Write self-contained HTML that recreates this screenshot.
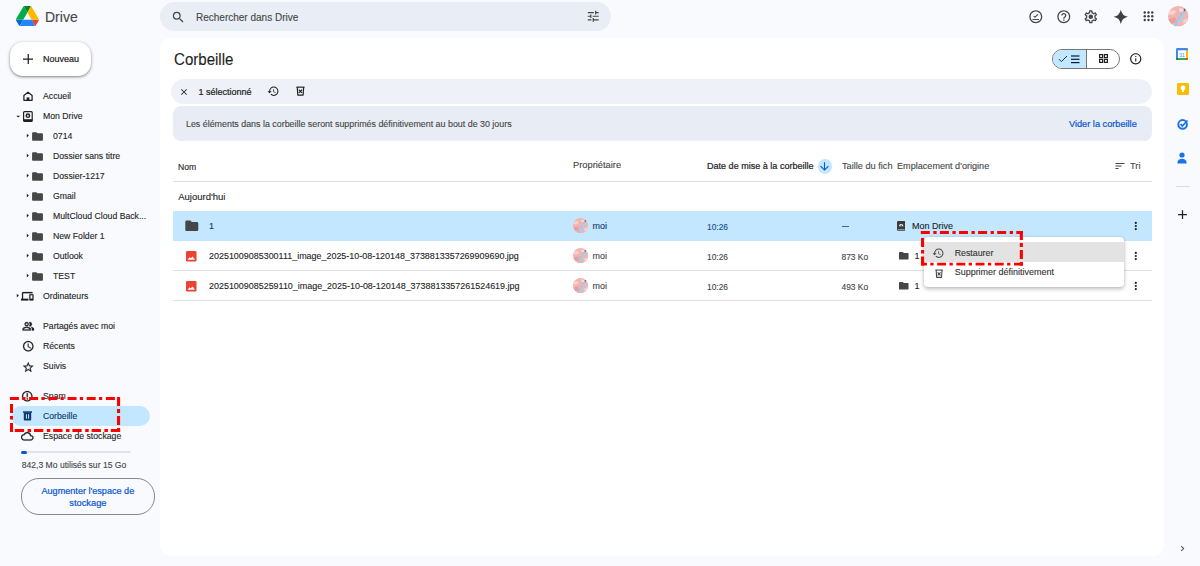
<!DOCTYPE html>
<html><head><meta charset="utf-8">
<style>
*{box-sizing:border-box;margin:0;padding:0}
html,body{width:1200px;height:566px;overflow:hidden;background:#f8fafd;font-family:"Liberation Sans",sans-serif;color:#1f1f1f;position:relative}
.a{position:absolute}
.t{position:absolute;white-space:nowrap;line-height:1}
svg{display:block}
</style></head><body>
<svg class="a" style="left:16.2px;top:6px" width="22.8" height="20.2" viewBox="0 0 87.3 78" preserveAspectRatio="none">
<path d="m6.6 66.85 3.85 6.65c.8 1.4 1.95 2.5 3.3 3.3l13.75-23.8h-27.5c0 1.55.4 3.1 1.2 4.5z" fill="#0066da"/>
<path d="m43.65 25-13.75-23.8c-1.35.8-2.5 1.9-3.3 3.3l-25.4 44a9.06 9.06 0 0 0 -1.2 4.5h27.5z" fill="#00ac47"/>
<path d="m73.55 76.8c1.35-.8 2.5-1.9 3.3-3.3l1.6-2.75 7.65-13.25c.8-1.4 1.2-2.95 1.2-4.5h-27.502l5.852 11.5z" fill="#ea4335"/>
<path d="m43.65 25 13.75-23.8c-1.35-.8-2.9-1.2-4.5-1.2h-18.5c-1.6 0-3.15.45-4.5 1.2z" fill="#00832d"/>
<path d="m59.8 53h-32.3l-13.75 23.8c1.35.8 2.9 1.2 4.5 1.2h50.8c1.6 0 3.15-.45 4.5-1.2z" fill="#2684fc"/>
<path d="m73.4 26.5-12.7-22c-.8-1.4-1.95-2.5-3.3-3.3l-13.75 23.8 16.15 28h27.45c0-1.55-.4-3.1-1.2-4.5z" fill="#ffba00"/>
</svg>
<div class="t" style="left:45px;top:9.75px;font-size:14px;color:#444746;-webkit-text-stroke:0.12px #444746;">Drive</div>
<div class="a" style="left:160px;top:2px;width:451px;height:29px;border-radius:15px;background:#e9eef6"></div>
<svg class="a" style="left:170.8px;top:9.8px;" width="14.6" height="14.6" viewBox="0 0 24 24"><path fill="#444746" fill-rule="evenodd" d="M15.5 14h-.79l-.28-.27A6.471 6.471 0 0 0 16 9.5 6.5 6.5 0 1 0 9.5 16c1.61 0 3.09-.59 4.23-1.57l.27.28v.79l5 4.99L20.49 19l-4.99-5zm-6 0C7.01 14 5 11.99 5 9.5S7.01 5 9.5 5 14 7.01 14 9.5 11.99 14 9.5 14z"/></svg>
<div class="t" style="left:196px;top:13.23px;font-size:10px;color:#444746;-webkit-text-stroke:0.12px #444746;">Rechercher dans Drive</div>
<svg class="a" style="left:586px;top:9px;" width="14.5" height="14.5" viewBox="0 0 24 24"><path fill="#444746" fill-rule="evenodd" d="M3 17v2h6v-2H3zM3 5v2h10V5H3zm10 16v-2h8v-2h-8v-2h-2v6h2zM7 9v2H3v2h4v2h2V9H7zm14 4v-2H11v2h10zm-6-4h2V7h4V5h-4V3h-2v6z"/></svg>
<svg class="a" style="left:1028.2px;top:8.6px;" width="15.6" height="15.6" viewBox="0 0 24 24"><path fill="#444746" fill-rule="evenodd" d="M12 2C6.48 2 2 6.48 2 12s4.48 10 10 10 10-4.48 10-10S17.52 2 12 2zm0 18c-4.41 0-8-3.59-8-8s3.59-8 8-8 8 3.59 8 8-3.59 8-8 8zM7 15.5h10v1.6H7zm2.2-5.3l-1.1 1.1 2.6 2.6 5.2-5.2-1.1-1.1-4.1 4.1z"/></svg>
<svg class="a" style="left:1055.7px;top:8.6px;" width="15.6" height="15.6" viewBox="0 0 24 24"><path fill="#444746" fill-rule="evenodd" d="M11 18h2v-2h-2v2zm1-16C6.48 2 2 6.48 2 12s4.48 10 10 10 10-4.48 10-10S17.52 2 12 2zm0 18c-4.41 0-8-3.59-8-8s3.59-8 8-8 8 3.59 8 8-3.59 8-8 8zm0-14c-2.21 0-4 1.79-4 4h2c0-1.1.9-2 2-2s2 .9 2 2c0 2-3 1.75-3 5h2c0-2.25 3-2.5 3-5 0-2.21-1.79-4-4-4z"/></svg>
<svg class="a" style="left:1083.2px;top:8.6px;" width="15.6" height="15.6" viewBox="0 0 24 24"><path fill="#444746" fill-rule="evenodd" d="M19.43 12.98c.04-.32.07-.64.07-.98 0-.34-.03-.66-.07-.98l2.11-1.65c.19-.15.24-.42.12-.64l-2-3.46a.5.5 0 0 0-.61-.22l-2.49 1c-.52-.4-1.08-.73-1.690-.98l-.38-2.65A.488.488 0 0 0 14 2h-4c-.25 0-.46.18-.49.42l-.38 2.65c-.61.25-1.17.59-1.69.98l-2.49-1a.566.566 0 0 0-.18-.03c-.17 0-.34.09-.43.25l-2 3.46c-.13.22-.07.49.12.64l2.11 1.65c-.04.32-.07.65-.07.98 0 .33.03.66.07.98l-2.11 1.65c-.19.15-.24.42-.12.64l2 3.46a.5.5 0 0 0 .61.22l2.49-1c.52.4 1.08.73 1.69.98l.38 2.65c.03.24.24.42.49.42h4c.25 0 .46-.18.49-.42l.38-2.65c.61-.25 1.17-.59 1.69-.98l2.49 1c.06.02.12.03.18.03.17 0 .34-.09.43-.25l2-3.46c.12-.22.07-.49-.12-.64l-2.11-1.65zm-1.98-1.71c.04.31.05.52.05.73 0 .21-.02.43-.05.73l-.14 1.13.89.7 1.08.84-.7 1.21-1.27-.51-1.04-.42-.9.68c-.43.32-.84.56-1.25.73l-1.06.43-.16 1.13-.2 1.35h-1.4l-.19-1.35-.16-1.13-1.06-.43c-.43-.18-.83-.41-1.23-.71l-.91-.7-1.06.43-1.27.51-.7-1.210 1.08-.84.89-.7-.14-1.13c-.03-.31-.05-.54-.05-.74s.02-.43.05-.73l.14-1.13-.89-.7-1.08-.84.7-1.21 1.27.51 1.04.42.9-.68c.43-.32.84-.56 1.25-.73l1.06-.43.16-1.13.2-1.35h1.39l.19 1.35.16 1.13 1.06.43c.43.18.83.41 1.23.71l.91.7 1.06-.43 1.27-.51.7 1.21-1.07.85-.89.7.14 1.13zM12 8.5a3.5 3.5 0 1 0 0 7 3.5 3.5 0 0 0 0-7z"/></svg>
<svg class="a" style="left:1112.5px;top:8.9px;" width="15.6" height="15.6" viewBox="0 0 24 24"><path fill="#3c4043" fill-rule="evenodd" d="M12 1Q13.8 10.2 23 12Q13.8 13.8 12 23Q10.2 13.8 1 12Q10.2 10.2 12 1z"/></svg>
<svg class="a" style="left:0;top:0" width="1200" height="40"><circle cx="1144.75" cy="12.50" r="1.2" fill="#3c3c3c"/><circle cx="1144.75" cy="16.25" r="1.2" fill="#3c3c3c"/><circle cx="1144.75" cy="20.00" r="1.2" fill="#3c3c3c"/><circle cx="1148.50" cy="12.50" r="1.2" fill="#3c3c3c"/><circle cx="1148.50" cy="16.25" r="1.2" fill="#3c3c3c"/><circle cx="1148.50" cy="20.00" r="1.2" fill="#3c3c3c"/><circle cx="1152.25" cy="12.50" r="1.2" fill="#3c3c3c"/><circle cx="1152.25" cy="16.25" r="1.2" fill="#3c3c3c"/><circle cx="1152.25" cy="20.00" r="1.2" fill="#3c3c3c"/></svg>
<svg class="a" style="left:1168.3px;top:6px" width="20.5" height="20.5" viewBox="0 0 20 20">
<defs><clipPath id="cav"><circle cx="10" cy="10" r="10"/></clipPath></defs>
<g clip-path="url(#cav)"><rect width="20" height="20" fill="#f3b3b1"/>
<path d="M0 6 Q4 3 8 5 L6 8 Q3 9 0 8Z" fill="#f8d2d0"/><path d="M0 13 L7 11 L8 16 L0 18Z" fill="#ee9d9a"/>
<path d="M11 2 L15 3 L14 6 L11 5Z" fill="#f9dcda"/><path d="M14 14 L19 12 L20 16 L15 17Z" fill="#f7cfcd"/>
<path d="M16 4.5 L17 6 L13 8.5 L14 10 L10.5 12.5 L11.5 14 L8 16.5 L9 18 L7 20 L5.5 19 L7.5 17 L6.5 15.5 L10 13 L9 11.5 L12.5 9 L11.5 7.5Z" fill="#8ccdf0"/>
<path d="M12 10 L17 8.5 L17.5 10 L12.5 11.5Z" fill="#9fd6f2"/><path d="M9 14.5 L15 13 L15.5 14.5 L9.5 16Z" fill="#9fd6f2"/>
<path d="M15.5 2.5 L17 2.5 L17 5 L15.5 5Z" fill="#6b6b6b"/></g></svg>
<div class="a" style="left:10px;top:42px;width:81px;height:34px;border-radius:13px;background:#fff;box-shadow:0 1px 2px rgba(0,0,0,.3),0 1px 3px 1px rgba(0,0,0,.15)"></div>
<svg class="a" style="left:22.5px;top:54px" width="10.5" height="10" viewBox="0 0 10.5 10"><path d="M0 5h10.5M5.25 0v10" stroke="#1f1f1f" stroke-width="1.25"/></svg>
<div class="t" style="left:43px;top:55.38px;font-size:9.0px;color:#1f1f1f;-webkit-text-stroke:0.22px #1f1f1f;">Nouveau</div>
<svg class="a" style="left:22px;top:90px" width="12" height="12" viewBox="0 0 12 12"><path d="M1.9 10.3V5.4L6 2.2l4.1 3.2v4.9z" fill="none" stroke="#1f1f1f" stroke-width="1.25" stroke-linejoin="round"/><rect x="4.6" y="7.4" width="2.8" height="3.3" fill="#1f1f1f"/></svg>
<div class="t" style="left:43px;top:92.44px;font-size:8.7px;color:#1f1f1f;-webkit-text-stroke:0.12px #1f1f1f;">Accueil</div>
<svg class="a" style="left:15.8px;top:114.5px" width="5" height="4"><path d="M0.3 0.7h3.8L2.2 2.6z" fill="#1f1f1f"/></svg>
<svg class="a" style="left:22px;top:110px" width="12" height="12" viewBox="0 0 12 12"><rect x="1.6" y="1.6" width="8.6" height="9.8" rx="1" fill="none" stroke="#1f1f1f" stroke-width="1.2"/><rect x="1.6" y="9.2" width="8.6" height="2.2" fill="#1f1f1f"/><circle cx="5.9" cy="5.7" r="2.4" fill="#1f1f1f"/><path d="M5.9 4.3l1.2 2.1H4.7z" fill="#fff"/></svg>
<div class="t" style="left:43px;top:112.44px;font-size:8.7px;color:#1f1f1f;-webkit-text-stroke:0.12px #1f1f1f;">Mon Drive</div>
<svg class="a" style="left:25.8px;top:133.0px" width="4" height="6"><path d="M0.8 0.7v3.8l2-1.9z" fill="#1f1f1f"/></svg>
<svg class="a" style="left:31.2px;top:129.70000000000002px;" width="13" height="13" viewBox="0 0 24 24"><path fill="#444746" fill-rule="evenodd" d="M10 4H4c-1.1 0-1.99.9-1.99 2L2 18c0 1.1.9 2 2 2h16c1.1 0 2-.9 2-2V8c0-1.1-.9-2-2-2h-8l-2-2z"/></svg>
<div class="t" style="left:53px;top:132.44px;font-size:8.7px;color:#1f1f1f;-webkit-text-stroke:0.12px #1f1f1f;">0714</div>
<svg class="a" style="left:25.8px;top:153.0px" width="4" height="6"><path d="M0.8 0.7v3.8l2-1.9z" fill="#1f1f1f"/></svg>
<svg class="a" style="left:31.2px;top:149.70000000000002px;" width="13" height="13" viewBox="0 0 24 24"><path fill="#444746" fill-rule="evenodd" d="M10 4H4c-1.1 0-1.99.9-1.99 2L2 18c0 1.1.9 2 2 2h16c1.1 0 2-.9 2-2V8c0-1.1-.9-2-2-2h-8l-2-2z"/></svg>
<div class="t" style="left:53px;top:152.44px;font-size:8.7px;color:#1f1f1f;-webkit-text-stroke:0.12px #1f1f1f;">Dossier sans titre</div>
<svg class="a" style="left:25.8px;top:173.0px" width="4" height="6"><path d="M0.8 0.7v3.8l2-1.9z" fill="#1f1f1f"/></svg>
<svg class="a" style="left:31.2px;top:169.70000000000002px;" width="13" height="13" viewBox="0 0 24 24"><path fill="#444746" fill-rule="evenodd" d="M10 4H4c-1.1 0-1.99.9-1.99 2L2 18c0 1.1.9 2 2 2h16c1.1 0 2-.9 2-2V8c0-1.1-.9-2-2-2h-8l-2-2z"/></svg>
<div class="t" style="left:53px;top:172.44px;font-size:8.7px;color:#1f1f1f;-webkit-text-stroke:0.12px #1f1f1f;">Dossier-1217</div>
<svg class="a" style="left:25.8px;top:193.0px" width="4" height="6"><path d="M0.8 0.7v3.8l2-1.9z" fill="#1f1f1f"/></svg>
<svg class="a" style="left:31.2px;top:189.70000000000002px;" width="13" height="13" viewBox="0 0 24 24"><path fill="#444746" fill-rule="evenodd" d="M10 4H4c-1.1 0-1.99.9-1.99 2L2 18c0 1.1.9 2 2 2h16c1.1 0 2-.9 2-2V8c0-1.1-.9-2-2-2h-8l-2-2z"/></svg>
<div class="t" style="left:53px;top:192.44px;font-size:8.7px;color:#1f1f1f;-webkit-text-stroke:0.12px #1f1f1f;">Gmail</div>
<svg class="a" style="left:25.8px;top:213.0px" width="4" height="6"><path d="M0.8 0.7v3.8l2-1.9z" fill="#1f1f1f"/></svg>
<svg class="a" style="left:31.2px;top:209.70000000000002px;" width="13" height="13" viewBox="0 0 24 24"><path fill="#444746" fill-rule="evenodd" d="M10 4H4c-1.1 0-1.99.9-1.99 2L2 18c0 1.1.9 2 2 2h16c1.1 0 2-.9 2-2V8c0-1.1-.9-2-2-2h-8l-2-2z"/></svg>
<div class="t" style="left:53px;top:212.44px;font-size:8.7px;color:#1f1f1f;-webkit-text-stroke:0.12px #1f1f1f;">MultCloud Cloud Back...</div>
<svg class="a" style="left:25.8px;top:233.0px" width="4" height="6"><path d="M0.8 0.7v3.8l2-1.9z" fill="#1f1f1f"/></svg>
<svg class="a" style="left:31.2px;top:229.70000000000002px;" width="13" height="13" viewBox="0 0 24 24"><path fill="#444746" fill-rule="evenodd" d="M10 4H4c-1.1 0-1.99.9-1.99 2L2 18c0 1.1.9 2 2 2h16c1.1 0 2-.9 2-2V8c0-1.1-.9-2-2-2h-8l-2-2z"/></svg>
<div class="t" style="left:53px;top:232.44px;font-size:8.7px;color:#1f1f1f;-webkit-text-stroke:0.12px #1f1f1f;">New Folder 1</div>
<svg class="a" style="left:25.8px;top:253.0px" width="4" height="6"><path d="M0.8 0.7v3.8l2-1.9z" fill="#1f1f1f"/></svg>
<svg class="a" style="left:31.2px;top:249.70000000000002px;" width="13" height="13" viewBox="0 0 24 24"><path fill="#444746" fill-rule="evenodd" d="M10 4H4c-1.1 0-1.99.9-1.99 2L2 18c0 1.1.9 2 2 2h16c1.1 0 2-.9 2-2V8c0-1.1-.9-2-2-2h-8l-2-2z"/></svg>
<div class="t" style="left:53px;top:252.44px;font-size:8.7px;color:#1f1f1f;-webkit-text-stroke:0.12px #1f1f1f;">Outlook</div>
<svg class="a" style="left:25.8px;top:273.0px" width="4" height="6"><path d="M0.8 0.7v3.8l2-1.9z" fill="#1f1f1f"/></svg>
<svg class="a" style="left:31.2px;top:269.7px;" width="13" height="13" viewBox="0 0 24 24"><path fill="#444746" fill-rule="evenodd" d="M10 4H4c-1.1 0-1.99.9-1.99 2L2 18c0 1.1.9 2 2 2h16c1.1 0 2-.9 2-2V8c0-1.1-.9-2-2-2h-8l-2-2z"/></svg>
<div class="t" style="left:53px;top:272.44px;font-size:8.7px;color:#1f1f1f;-webkit-text-stroke:0.12px #1f1f1f;">TEST</div>
<svg class="a" style="left:15.8px;top:293.0px" width="4" height="6"><path d="M0.8 0.7v3.8l2-1.9z" fill="#1f1f1f"/></svg>
<svg class="a" style="left:21px;top:289.90000000000003px;" width="12.5" height="12.5" viewBox="0 0 24 24"><path stroke="#1f1f1f" stroke-width="0.4" fill="#1f1f1f" fill-rule="evenodd" d="M4 6h18V4H4c-1.1 0-2 .9-2 2v11H0v3h14v-3H4V6zm19 2h-6c-.55 0-1 .45-1 1v10c0 .55.45 1 1 1h6c.55 0 1-.45 1-1V9c0-.55-.45-1-1-1zm-1 9h-4v-7h4v7z"/></svg>
<div class="t" style="left:43px;top:292.44px;font-size:8.7px;color:#1f1f1f;-webkit-text-stroke:0.12px #1f1f1f;">Ordinateurs</div>
<svg class="a" style="left:22.0px;top:320.0px;overflow:visible" width="12.5" height="12.5" viewBox="0 0 24 24"><path stroke="#1f1f1f" stroke-width="0.5" fill="#1f1f1f" fill-rule="evenodd" d="M16.67 13.13C18.04 14.06 19 15.32 19 17v3h4v-3c0-2.18-3.57-3.47-6.33-3.87zM15 12c2.21 0 4-1.79 4-4s-1.79-4-4-4c-.47 0-.91.1-1.33.24a5.98 5.980 0 0 1 0 7.52c.42.14.86.24 1.33.24zm-6 0c2.21 0 4-1.79 4-4s-1.79-4-4-4-4 1.79-4 4 1.79 4 4 4zm0-6c1.1 0 2 .9 2 2s-.9 2-2 2-2-.9-2-2 .9-2 2-2zm0 7c-2.67 0-8 1.34-8 4v3h16v-3c0-2.66-5.33-4-8-4zm6 5H3v-.99C3.2 17.29 6.3 15 9 15s5.8 2.29 6 3v0z"/></svg>
<div class="t" style="left:43px;top:322.44px;font-size:8.7px;color:#1f1f1f;-webkit-text-stroke:0.12px #1f1f1f;">Partagés avec moi</div>
<svg class="a" style="left:21.6px;top:340.0px;overflow:visible" width="12.5" height="12.5" viewBox="0 0 24 24"><path stroke="#1f1f1f" stroke-width="0.5" fill="#1f1f1f" fill-rule="evenodd" d="M11.99 2C6.47 2 2 6.48 2 12s4.47 10 9.99 10C17.52 22 22 17.52 22 12S17.52 2 11.99 2zM12 20c-4.42 0-8-3.58-8-8s3.58-8 8-8 8 3.58 8 8-3.58 8-8 8zm.5-13H11v6l5.25 3.15.75-1.23-4.5-2.67z"/></svg>
<div class="t" style="left:43px;top:342.44px;font-size:8.7px;color:#1f1f1f;-webkit-text-stroke:0.12px #1f1f1f;">Récents</div>
<svg class="a" style="left:21.7px;top:360.5px;overflow:visible" width="12.5" height="12.5" viewBox="0 0 24 24"><path stroke="#1f1f1f" stroke-width="0.5" fill="#1f1f1f" fill-rule="evenodd" d="M22 9.24l-7.19-.62L12 2 9.19 8.63 2 9.24l5.46 4.73L5.82 21 12 17.27 18.18 21l-1.63-7.03L22 9.24zM12 15.4l-3.76 2.27 1-4.28-3.32-2.88 4.38-.38L12 6.1l1.71 4.04 4.38.38-3.32 2.88 1 4.28L12 15.4z"/></svg>
<div class="t" style="left:43px;top:362.44px;font-size:8.7px;color:#1f1f1f;-webkit-text-stroke:0.12px #1f1f1f;">Suivis</div>
<svg class="a" style="left:21.2px;top:389.5px;overflow:visible" width="12.5" height="12.5" viewBox="0 0 24 24"><path stroke="#1f1f1f" stroke-width="0.5" fill="#1f1f1f" fill-rule="evenodd" d="M12 2C6.48 2 2 6.48 2 12s4.48 10 10 10 10-4.48 10-10S17.52 2 12 2zm0 18c-4.41 0-8-3.59-8-8s3.59-8 8-8 8 3.59 8 8-3.59 8-8 8zM11 6h2v8h-2zm0 10h2v2h-2z"/></svg>
<div class="t" style="left:43px;top:392.44px;font-size:8.7px;color:#1f1f1f;-webkit-text-stroke:0.12px #1f1f1f;">Spam</div>
<div class="a" style="left:11px;top:406px;width:139px;height:20px;border-radius:10px;background:#c2e7ff"></div>
<svg class="a" style="left:23.3px;top:411.3px" width="9" height="9.5" viewBox="0 0 9 9.5"><rect x="0" y="0.3" width="9" height="1.5" fill="#0e3a6b"/><path d="M0.8 1.5h7.4v7a1 1 0 0 1-1 1H1.8a1 1 0 0 1-1-1z" fill="#0e3a6b"/><rect x="2.9" y="3.2" width="1" height="4.5" fill="#c2e7ff"/><rect x="5.1" y="3.2" width="1" height="4.5" fill="#c2e7ff"/></svg>
<div class="t" style="left:43px;top:412.44px;font-size:8.7px;color:#0e3a6b;-webkit-text-stroke:0.12px #0e3a6b;">Corbeille</div>
<svg class="a" style="left:21.2px;top:430px;" width="12.5" height="12.5" viewBox="0 0 24 24"><path stroke="#1f1f1f" stroke-width="0.5" fill="#1f1f1f" fill-rule="evenodd" d="M19.35 10.04A7.49 7.49 0 0 0 12 4C9.11 4 6.6 5.64 5.35 8.04A5.994 5.994 0 0 0 0 14c0 3.31 2.69 6 6 6h13c2.76 0 5-2.24 5-5 0-2.64-2.05-4.78-4.65-4.96zM19 18H6c-2.21 0-4-1.79-4-4 0-2.05 1.53-3.76 3.56-3.97l1.07-.11.5-.95A5.469 5.469 0 0 1 12 6c2.62 0 4.880 1.86 5.39 4.43l.3 1.5 1.53.11A2.98 2.98 0 0 1 22 15c0 1.65-1.35 3-3 3z"/></svg>
<div class="t" style="left:43px;top:432.44px;font-size:8.7px;color:#1f1f1f;-webkit-text-stroke:0.12px #1f1f1f;">Espace de stockage</div>
<div class="a" style="left:21px;top:451px;width:110px;height:2.3px;border-radius:2px;background:#e0e3e8"></div>
<div class="a" style="left:21px;top:451px;width:6px;height:2.5px;border-radius:2px;background:#0b57d0"></div>
<div class="t" style="left:21.7px;top:461.02px;font-size:8.6px;color:#444746;-webkit-text-stroke:0.12px #444746;">842,3 Mo utilisés sur 15 Go</div>
<div class="a" style="left:21px;top:478px;width:134px;height:37px;border-radius:18px;border:1px solid #858886"></div>
<div class="t" style="left:41.5px;top:487.30px;font-size:9.1px;color:#0b57d0;-webkit-text-stroke:0.22px #0b57d0;">Augmenter l'espace de</div>
<div class="t" style="left:69.3px;top:498.63px;font-size:9.3px;color:#0b57d0;-webkit-text-stroke:0.22px #0b57d0;">stockage</div>
<div class="a" style="left:160px;top:38px;width:1004.3px;height:517.5px;border-radius:11px;background:#fff"></div>
<div class="t" style="left:173.5px;top:51.20px;font-size:16.3px;color:#1f1f1f;-webkit-text-stroke:0.12px #1f1f1f;transform:scaleX(0.925);transform-origin:0 0;">Corbeille</div>
<div class="a" style="left:1052px;top:49px;width:68px;height:20px;border-radius:10px;border:1px solid #747775;overflow:hidden">
<div class="a" style="left:0;top:0;width:34px;height:18px;background:#c2e7ff;border-right:1px solid #747775"></div></div>
<svg class="a" style="left:1058px;top:54px" width="10" height="10" viewBox="0 0 10 10"><path d="M1 5.2l2.4 2.4L9 2" stroke="#001d35" stroke-width="0.9" fill="none"/></svg>
<svg class="a" style="left:1071px;top:55px" width="9" height="9"><rect x="0" y="0.4" width="8.5" height="1.2" fill="#001d35"/><rect x="0" y="3.7" width="8.5" height="1.2" fill="#001d35"/><rect x="0" y="7" width="8.5" height="1.2" fill="#001d35"/></svg>
<svg class="a" style="left:1098.5px;top:54px" width="9" height="9"><rect x="0.6" y="0.6" width="3" height="3" fill="none" stroke="#1f1f1f" stroke-width="1.2"/><rect x="5.4" y="0.6" width="3" height="3" fill="none" stroke="#1f1f1f" stroke-width="1.2"/><rect x="0.6" y="5.4" width="3" height="3" fill="none" stroke="#1f1f1f" stroke-width="1.2"/><rect x="5.4" y="5.4" width="3" height="3" fill="none" stroke="#1f1f1f" stroke-width="1.2"/></svg>
<svg class="a" style="left:1128.8px;top:52.3px;" width="13.5" height="13.5" viewBox="0 0 24 24"><path fill="#1f1f1f" fill-rule="evenodd" d="M11 7h2v2h-2zm0 4h2v6h-2zm1-9C6.48 2 2 6.48 2 12s4.48 10 10 10 10-4.48 10-10S17.52 2 12 2zm0 18c-4.41 0-8-3.59-8-8s3.59-8 8-8 8 3.59 8 8-3.59 8-8 8z"/></svg>
<div class="a" style="left:171px;top:79px;width:981px;height:25px;border-radius:12.5px;background:#eef1f7"></div>
<svg class="a" style="left:178.5px;top:87px;" width="10" height="10" viewBox="0 0 24 24"><path fill="#1f1f1f" fill-rule="evenodd" d="M19 6.41L17.59 5 12 10.59 6.41 5 5 6.41 10.59 12 5 17.59 6.41 19 12 13.41 17.59 19 19 17.59 13.41 12z"/></svg>
<div class="t" style="left:198.5px;top:88.38px;font-size:9.0px;color:#1f1f1f;-webkit-text-stroke:0.22px #1f1f1f;">1 sélectionné</div>
<svg class="a" style="left:266.5px;top:84.7px;" width="12.5" height="12.5" viewBox="0 0 24 24"><path fill="#1f1f1f" fill-rule="evenodd" d="M13 3a9 9 0 0 0-9 9H1l3.89 3.89.07.14L9 12H6c0-3.87 3.13-7 7-7s7 3.13 7 7-3.130 7-7 7c-1.93 0-3.68-.79-4.94-2.06l-1.42 1.42A8.954 8.954 0 0 0 13 21a9 9 0 0 0 0-18zm-1 5v5l4.28 2.54.72-1.21-3.5-2.08V8H12z"/></svg>
<svg class="a" style="left:296.2px;top:86.2px" width="8.9" height="9.79" viewBox="0 0 10 11"><path d="M0.4 1.3h9.2" stroke="#1f1f1f" stroke-width="1.3"/><path d="M1.4 1.3l0.6 8.9h6l0.6-8.9" fill="none" stroke="#1f1f1f" stroke-width="1.3" stroke-linejoin="round"/><path d="M3.2 4.1l3.6 3.6M6.8 4.1l-3.6 3.6" stroke="#1f1f1f" stroke-width="1.35"/></svg>
<div class="a" style="left:173px;top:106px;width:979px;height:35px;border-radius:8px;background:#e8ecf4"></div>
<div class="t" style="left:186px;top:120.47px;font-size:8.9px;color:#444746;-webkit-text-stroke:0.12px #444746;">Les éléments dans la corbeille seront supprimés définitivement au bout de 30 jours</div>
<div class="t" style="left:1069px;top:120.11px;font-size:9.2px;color:#0b57d0;-webkit-text-stroke:0.22px #0b57d0;">Vider la corbeille</div>
<div class="t" style="left:178px;top:162.72px;font-size:8.6px;color:#1f1f1f;-webkit-text-stroke:0.12px #1f1f1f;">Nom</div>
<div class="t" style="left:573px;top:161.03px;font-size:9.3px;color:#444746;-webkit-text-stroke:0.12px #444746;">Propriétaire</div>
<div class="t" style="left:707px;top:162.14px;font-size:9.05px;color:#1f1f1f;-webkit-text-stroke:0.22px #1f1f1f;">Date de mise à la corbeille</div>
<div class="a" style="left:817.5px;top:159px;width:14.5px;height:14.5px;border-radius:50%;background:#c2e7ff"></div>
<svg class="a" style="left:818.3px;top:159.8px;" width="13" height="13" viewBox="0 0 24 24"><path fill="#0b57d0" fill-rule="evenodd" d="M20 12l-1.41-1.41L13 16.17V4h-2v12.17l-5.58-5.59L4 12l8 8 8-8z"/></svg>
<div class="t" style="left:842px;top:162.01px;font-size:9.2px;color:#444746;-webkit-text-stroke:0.12px #444746;">Taille du fich</div>
<div class="t" style="left:897px;top:162.10px;font-size:9.1px;color:#444746;-webkit-text-stroke:0.12px #444746;">Emplacement d'origine</div>
<svg class="a" style="left:1113.5px;top:159.5px;" width="12" height="12" viewBox="0 0 24 24"><path fill="#444746" fill-rule="evenodd" d="M3 18h6v-2H3v2zM3 6v2h18V6H3zm0 7h12v-2H3v2z"/></svg>
<div class="t" style="left:1130px;top:162.03px;font-size:9.3px;color:#444746;-webkit-text-stroke:0.12px #444746;">Tri</div>
<div class="a" style="left:173px;top:180.5px;width:979px;height:1px;background:#dedede"></div>
<div class="t" style="left:178.2px;top:192.16px;font-size:9.5px;color:#1f1f1f;-webkit-text-stroke:0.12px #1f1f1f;">Aujourd'hui</div>
<div class="a" style="left:173px;top:211px;width:979px;height:30px;background:#c2e7ff"></div>
<div class="a" style="left:173px;top:270px;width:979px;height:1px;background:#e0e0e0"></div>
<div class="a" style="left:173px;top:300px;width:979px;height:1px;background:#e0e0e0"></div>
<svg class="a" style="left:183.7px;top:217.8px;" width="15.6" height="15.6" viewBox="0 0 24 24"><path fill="#444746" fill-rule="evenodd" d="M10 4H4c-1.1 0-1.99.9-1.99 2L2 18c0 1.1.9 2 2 2h16c1.1 0 2-.9 2-2V8c0-1.1-.9-2-2-2h-8l-2-2z"/></svg>
<div class="t" style="left:209px;top:222.32px;font-size:8.95px;color:#0e3a6b;-webkit-text-stroke:0.12px #0e3a6b;">1</div>
<svg class="a" style="left:572.6999999999999px;top:218.4px" width="15.2" height="15.2" viewBox="0 0 20 20">
<g clip-path="url(#cav)"><rect width="20" height="20" fill="#f3b3b1"/>
<path d="M0 6 Q4 3 8 5 L6 8 Q3 9 0 8Z" fill="#f8d2d0"/><path d="M0 13 L7 11 L8 16 L0 18Z" fill="#ee9d9a"/>
<path d="M11 2 L15 3 L14 6 L11 5Z" fill="#f9dcda"/><path d="M14 14 L19 12 L20 16 L15 17Z" fill="#f7cfcd"/>
<path d="M16 4.5 L17 6 L13 8.5 L14 10 L10.5 12.5 L11.5 14 L8 16.5 L9 18 L7 20 L5.5 19 L7.5 17 L6.5 15.5 L10 13 L9 11.5 L12.5 9 L11.5 7.5Z" fill="#8ccdf0"/>
<path d="M12 10 L17 8.5 L17.5 10 L12.5 11.5Z" fill="#9fd6f2"/><path d="M9 14.5 L15 13 L15.5 14.5 L9.5 16Z" fill="#9fd6f2"/>
<path d="M15.5 2.5 L17 2.5 L17 5 L15.5 5Z" fill="#6b6b6b"/></g></svg>
<div class="t" style="left:592.6px;top:222.32px;font-size:8.95px;color:#0e3a6b;-webkit-text-stroke:0.12px #0e3a6b;">moi</div>
<div class="t" style="left:707px;top:222.79px;font-size:8.4px;color:#1a4f8f;-webkit-text-stroke:0.12px #1a4f8f;">10:26</div>
<div class="a" style="left:842px;top:225.6px;width:7px;height:0.9px;background:#3e6a9a"></div>
<svg class="a" style="left:897px;top:221.2px" width="8.4" height="9.8" viewBox="0 0 8.4 9.8"><rect x="0" y="0" width="8.4" height="9.8" rx="1" fill="#3c3c3c"/><path d="M2 5.2a2.2 2.2 0 0 1 4.4 0z" fill="#fff"/><path d="M4.2 3.6l0.9 1.4H3.3z" fill="#3c3c3c"/><rect x="0.8" y="8.1" width="6.8" height="0.9" fill="#9aa0a6"/></svg>
<div class="t" style="left:912px;top:222.28px;font-size:9.0px;color:#1f1f1f;-webkit-text-stroke:0.12px #1f1f1f;">Mon Drive</div>
<svg class="a" style="left:1134px;top:221px" width="4" height="10"><circle cx="1.8" cy="1.9" r="1.1" fill="#1f1f1f"/><circle cx="1.8" cy="5.0" r="1.1" fill="#1f1f1f"/><circle cx="1.8" cy="8.1" r="1.1" fill="#1f1f1f"/></svg>
<svg class="a" style="left:186px;top:251px" width="11" height="11" viewBox="0 0 11 11"><rect x="0" y="0" width="10.5" height="10.5" rx="1.2" fill="#ea4335"/><path d="M1.6 8.7 L3.6 6.3 L4.8 7.3 L6.6 5.4 L9 8.7Z" fill="#fff"/></svg>
<div class="t" style="left:209px;top:252.32px;font-size:8.95px;color:#1f1f1f;-webkit-text-stroke:0.12px #1f1f1f;">20251009085300111_image_2025-10-08-120148_3738813357269909690.jpg</div>
<svg class="a" style="left:572.6999999999999px;top:248.4px" width="15.2" height="15.2" viewBox="0 0 20 20">
<g clip-path="url(#cav)"><rect width="20" height="20" fill="#f3b3b1"/>
<path d="M0 6 Q4 3 8 5 L6 8 Q3 9 0 8Z" fill="#f8d2d0"/><path d="M0 13 L7 11 L8 16 L0 18Z" fill="#ee9d9a"/>
<path d="M11 2 L15 3 L14 6 L11 5Z" fill="#f9dcda"/><path d="M14 14 L19 12 L20 16 L15 17Z" fill="#f7cfcd"/>
<path d="M16 4.5 L17 6 L13 8.5 L14 10 L10.5 12.5 L11.5 14 L8 16.5 L9 18 L7 20 L5.5 19 L7.5 17 L6.5 15.5 L10 13 L9 11.5 L12.5 9 L11.5 7.5Z" fill="#8ccdf0"/>
<path d="M12 10 L17 8.5 L17.5 10 L12.5 11.5Z" fill="#9fd6f2"/><path d="M9 14.5 L15 13 L15.5 14.5 L9.5 16Z" fill="#9fd6f2"/>
<path d="M15.5 2.5 L17 2.5 L17 5 L15.5 5Z" fill="#6b6b6b"/></g></svg>
<div class="t" style="left:592.6px;top:252.32px;font-size:8.95px;color:#444746;-webkit-text-stroke:0.12px #444746;">moi</div>
<div class="t" style="left:707px;top:252.79px;font-size:8.4px;color:#444746;-webkit-text-stroke:0.12px #444746;">10:26</div>
<div class="t" style="left:841.5px;top:252.79px;font-size:8.4px;color:#444746;-webkit-text-stroke:0.12px #444746;">873 Ko</div>
<svg class="a" style="left:898px;top:250.4px;" width="11.5" height="11.5" viewBox="0 0 24 24"><path fill="#444746" fill-rule="evenodd" d="M10 4H4c-1.1 0-1.99.9-1.99 2L2 18c0 1.1.9 2 2 2h16c1.1 0 2-.9 2-2V8c0-1.1-.9-2-2-2h-8l-2-2z"/></svg>
<div class="t" style="left:914.5px;top:252.28px;font-size:9.0px;color:#1f1f1f;-webkit-text-stroke:0.12px #1f1f1f;">1</div>
<svg class="a" style="left:1134px;top:251px" width="4" height="10"><circle cx="1.8" cy="1.9" r="1.1" fill="#1f1f1f"/><circle cx="1.8" cy="5.0" r="1.1" fill="#1f1f1f"/><circle cx="1.8" cy="8.1" r="1.1" fill="#1f1f1f"/></svg>
<svg class="a" style="left:186px;top:281px" width="11" height="11" viewBox="0 0 11 11"><rect x="0" y="0" width="10.5" height="10.5" rx="1.2" fill="#ea4335"/><path d="M1.6 8.7 L3.6 6.3 L4.8 7.3 L6.6 5.4 L9 8.7Z" fill="#fff"/></svg>
<div class="t" style="left:209px;top:282.32px;font-size:8.95px;color:#1f1f1f;-webkit-text-stroke:0.12px #1f1f1f;">20251009085259110_image_2025-10-08-120148_3738813357261524619.jpg</div>
<svg class="a" style="left:572.6999999999999px;top:278.4px" width="15.2" height="15.2" viewBox="0 0 20 20">
<g clip-path="url(#cav)"><rect width="20" height="20" fill="#f3b3b1"/>
<path d="M0 6 Q4 3 8 5 L6 8 Q3 9 0 8Z" fill="#f8d2d0"/><path d="M0 13 L7 11 L8 16 L0 18Z" fill="#ee9d9a"/>
<path d="M11 2 L15 3 L14 6 L11 5Z" fill="#f9dcda"/><path d="M14 14 L19 12 L20 16 L15 17Z" fill="#f7cfcd"/>
<path d="M16 4.5 L17 6 L13 8.5 L14 10 L10.5 12.5 L11.5 14 L8 16.5 L9 18 L7 20 L5.5 19 L7.5 17 L6.5 15.5 L10 13 L9 11.5 L12.5 9 L11.5 7.5Z" fill="#8ccdf0"/>
<path d="M12 10 L17 8.5 L17.5 10 L12.5 11.5Z" fill="#9fd6f2"/><path d="M9 14.5 L15 13 L15.5 14.5 L9.5 16Z" fill="#9fd6f2"/>
<path d="M15.5 2.5 L17 2.5 L17 5 L15.5 5Z" fill="#6b6b6b"/></g></svg>
<div class="t" style="left:592.6px;top:282.32px;font-size:8.95px;color:#444746;-webkit-text-stroke:0.12px #444746;">moi</div>
<div class="t" style="left:707px;top:282.79px;font-size:8.4px;color:#444746;-webkit-text-stroke:0.12px #444746;">10:26</div>
<div class="t" style="left:841.5px;top:282.79px;font-size:8.4px;color:#444746;-webkit-text-stroke:0.12px #444746;">493 Ko</div>
<svg class="a" style="left:898px;top:280.4px;" width="11.5" height="11.5" viewBox="0 0 24 24"><path fill="#444746" fill-rule="evenodd" d="M10 4H4c-1.1 0-1.99.9-1.99 2L2 18c0 1.1.9 2 2 2h16c1.1 0 2-.9 2-2V8c0-1.1-.9-2-2-2h-8l-2-2z"/></svg>
<div class="t" style="left:914.5px;top:282.28px;font-size:9.0px;color:#1f1f1f;-webkit-text-stroke:0.12px #1f1f1f;">1</div>
<svg class="a" style="left:1134px;top:281px" width="4" height="10"><circle cx="1.8" cy="1.9" r="1.1" fill="#1f1f1f"/><circle cx="1.8" cy="5.0" r="1.1" fill="#1f1f1f"/><circle cx="1.8" cy="8.1" r="1.1" fill="#1f1f1f"/></svg>
<div class="a" style="left:924px;top:237px;width:200px;height:50px;border-radius:4px;background:#fff;box-shadow:0 2px 4px rgba(0,0,0,.25),0 0 2px rgba(0,0,0,.12)"></div>
<div class="a" style="left:924px;top:242px;width:200px;height:20px;background:#e3e3e3"></div>
<svg class="a" style="left:932px;top:246.5px;" width="12.5" height="12.5" viewBox="0 0 24 24"><path fill="#444746" fill-rule="evenodd" d="M13 3a9 9 0 0 0-9 9H1l3.89 3.89.07.14L9 12H6c0-3.87 3.13-7 7-7s7 3.13 7 7-3.130 7-7 7c-1.93 0-3.68-.79-4.94-2.06l-1.42 1.42A8.954 8.954 0 0 0 13 21a9 9 0 0 0 0-18zm-1 5v5l4.28 2.54.72-1.21-3.5-2.08V8H12z"/></svg>
<div class="t" style="left:954.7px;top:248.55px;font-size:8.8px;color:#333333;-webkit-text-stroke:0.12px #333333;">Restaurer</div>
<svg class="a" style="left:934.6px;top:268.6px" width="8.2" height="9.02" viewBox="0 0 10 11"><path d="M0.4 1.3h9.2" stroke="#444746" stroke-width="1.3"/><path d="M1.4 1.3l0.6 8.9h6l0.6-8.9" fill="none" stroke="#444746" stroke-width="1.3" stroke-linejoin="round"/><path d="M3.2 4.1l3.6 3.6M6.8 4.1l-3.6 3.6" stroke="#444746" stroke-width="1.35"/></svg>
<div class="t" style="left:954.7px;top:268.30px;font-size:8.98px;color:#333333;-webkit-text-stroke:0.12px #333333;">Supprimer définitivement</div>
<svg class="a" style="left:1176px;top:48px" width="12" height="12" viewBox="0 0 12 12">
<rect x="0" y="0" width="12" height="12" rx="1.2" fill="#4285f4"/><rect x="2" y="2.3" width="8" height="7.7" fill="#fff"/>
<path d="M0 10h2v2h-0.8A1.2 1.2 0 0 1 0 10.8z" fill="#188038"/><path d="M2 10h8v2H2z" fill="#34a853"/><path d="M10 10h2v.8A1.2 1.2 0 0 1 10.8 12H10z" fill="#ea4335"/><path d="M10 2.3h2V10h-2z" fill="#fbbc04"/>
<text x="6" y="8.6" font-size="5" font-family="Liberation Sans" text-anchor="middle" fill="#4285f4">31</text></svg>
<svg class="a" style="left:1176.5px;top:83px" width="12" height="12" viewBox="0 0 12 12">
<rect x="0" y="0" width="12" height="12" rx="1.2" fill="#fbbc04"/><circle cx="6" cy="5" r="2.4" fill="#fff"/><rect x="5" y="7" width="2" height="2" fill="#fff"/></svg>
<svg class="a" style="left:1177px;top:118px" width="12" height="12" viewBox="0 0 12 12">
<circle cx="5.6" cy="6.4" r="4.3" fill="none" stroke="#1a73e8" stroke-width="2"/><path d="M3.5 6.2l1.8 1.8 5.2-5.5" stroke="#1a73e8" stroke-width="1.8" fill="none"/></svg>
<svg class="a" style="left:1177px;top:152px" width="10" height="12" viewBox="0 0 10 12">
<circle cx="5" cy="3" r="2.6" fill="#1a73e8"/><path d="M0.5 11.5v-1.5c0-2 2-3.3 4.5-3.3s4.5 1.3 4.5 3.3v1.5z" fill="#1a73e8"/></svg>
<div class="a" style="left:1176px;top:186px;width:14px;height:1px;background:#dadce0"></div>
<svg class="a" style="left:1175px;top:207px;" width="15" height="15" viewBox="0 0 24 24"><path fill="#1f1f1f" fill-rule="evenodd" d="M19 13h-6v6h-2v-6H5v-2h6V5h2v6h6v2z"/></svg>
<svg class="a" style="left:1176.5px;top:542.5px;" width="11" height="11" viewBox="0 0 24 24"><path fill="#444746" fill-rule="evenodd" d="M10 6L8.59 7.41 13.17 12l-4.58 4.59L10 18l6-6z"/></svg>
<svg class="a" style="left:0;top:0" width="1200" height="566"><path d="M9.9 398.4L115.1 398.4" stroke="#ff0000" stroke-width="2.95" stroke-dasharray="9 3.3 3.2 3.7" fill="none"/><path d="M118.55 397L118.55 431.8" stroke="#ff0000" stroke-width="3.1" stroke-dasharray="9 3 4 3" fill="none"/><path d="M120.1 430.4L12.9 430.4" stroke="#ff0000" stroke-width="3.0" stroke-dasharray="9.3 2.9 3.5 3.5" fill="none"/><path d="M11.5 432L11.5 403.6" stroke="#ff0000" stroke-width="3.0" stroke-dasharray="9 3.4 3.6 3" fill="none"/><path d="M920.8 232.5L1022.9 232.5" stroke="#ff0000" stroke-width="2.9" stroke-dasharray="9 3.5 3.3 3.3" fill="none"/><path d="M1021.35 231L1021.35 265.7" stroke="#ff0000" stroke-width="3.1" stroke-dasharray="9 3 4 3" fill="none"/><path d="M1022.9 264.1L921.1 264.1" stroke="#ff0000" stroke-width="2.9" stroke-dasharray="8.9 3.6 3.3 3.4" fill="none"/><path d="M922.55 265.6L922.55 237.7" stroke="#ff0000" stroke-width="3.1" stroke-dasharray="9 3.1 3.6 3" fill="none"/></svg>
</body></html>
